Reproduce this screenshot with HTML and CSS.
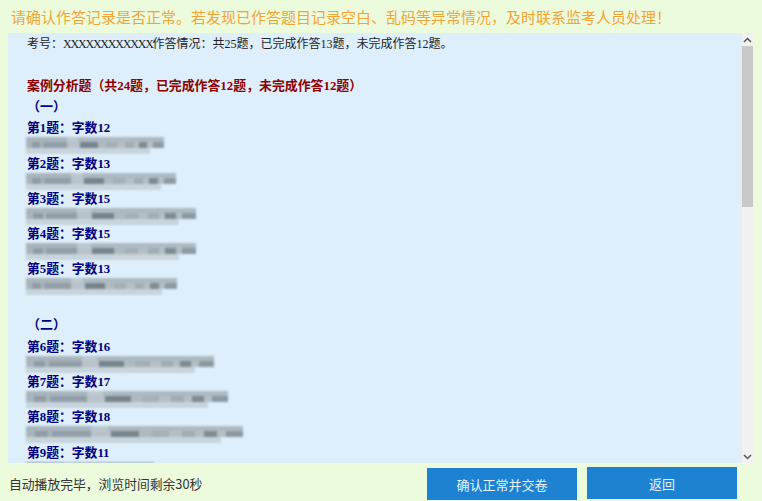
FILE: index.html
```html
<!DOCTYPE html>
<html lang="zh-CN">
<head>
  <meta charset="UTF-8">
  <meta name="viewport" content="width=device-width, initial-scale=1.0">
  <title>确认作答记录</title>
  <link rel="stylesheet" href="styles.css">
</head>
<body>
  <div class="notice">请确认作答记录是否正常。若发现已作答题目记录空白、乱码等异常情况，及时联系监考人员处理！</div>

  <div class="viewer">
    <div class="record">
      <p class="summary">考号：<span class="exam-no">XXXXXXXXXXXX</span>作答情况：共25题，已完成作答13题，未完成作答12题。</p>
      <h3 class="section-title">案例分析题（共24题，已完成作答12题，未完成作答12题）</h3>

      <h4 class="case-title">（一）</h4>
      <div class="question">第1题：字数12</div>
      <div class="answer" style="width: 138px"></div>
      <div class="question">第2题：字数13</div>
      <div class="answer" style="width: 150px"></div>
      <div class="question">第3题：字数15</div>
      <div class="answer" style="width: 170px"></div>
      <div class="question">第4题：字数15</div>
      <div class="answer" style="width: 170px"></div>
      <div class="question">第5题：字数13</div>
      <div class="answer" style="width: 151px"></div>

      <h4 class="case-title second">（二）</h4>
      <div class="question">第6题：字数16</div>
      <div class="answer" style="width: 188px"></div>
      <div class="question">第7题：字数17</div>
      <div class="answer" style="width: 202px"></div>
      <div class="question">第8题：字数18</div>
      <div class="answer" style="width: 217px"></div>
      <div class="question">第9题：字数11</div>
      <div class="answer" style="width: 128px"></div>
    </div>

    <div class="scrollbar">
      <div class="scroll-arrow">
        <svg width="9" height="6" viewBox="0 0 9 6"><path d="M1 5 L4.5 1.5 L8 5" fill="none" stroke="#555" stroke-width="1.5"/></svg>
      </div>
      <div class="scroll-track"><div class="scroll-thumb"></div></div>
      <div class="scroll-arrow">
        <svg width="9" height="6" viewBox="0 0 9 6"><path d="M1 1 L4.5 4.5 L8 1" fill="none" stroke="#555" stroke-width="1.5"/></svg>
      </div>
    </div>
  </div>

  <div class="footer">
    <span class="countdown">自动播放完毕，浏览时间剩余30秒</span>
    <button class="btn btn-confirm">确认正常并交卷</button>
    <button class="btn btn-back">返回</button>
  </div>
</body>
</html>
```

FILE: styles.css
```css
* {
  margin: 0;
  padding: 0;
  box-sizing: border-box;
}

body {
  width: 762px;
  height: 501px;
  overflow: hidden;
  background-color: #ecfbdc;
  font-family: "Noto Sans CJK SC", sans-serif;
}

.notice {
  height: 33px;
  padding: 6px 0 0 11px;
  font-size: 15px;
  line-height: 21px;
  color: #f4a436;
  white-space: nowrap;
}

.viewer {
  display: flex;
  width: 745px;
  height: 430px;
  margin-left: 8px;
}

.record {
  flex: 1;
  overflow: hidden;
  padding: 3px 0 0 19px;
  background-color: #deeffb;
  font-family: "Liberation Serif", "Noto Sans CJK SC", serif;
  font-size: 12px;
}

.summary {
  height: 16px;
  line-height: 16px;
  color: #222;
  white-space: nowrap;
}

.exam-no {
  letter-spacing: -1.2px;
}

.section-title {
  margin-top: 26px;
  height: 16px;
  line-height: 16px;
  font-size: 12.9px;
  color: #8b0000;
}

.case-title {
  margin-top: 5px;
  height: 16px;
  line-height: 16px;
  font-size: 13px;
  color: #00007f;
}

.case-title.second {
  margin-top: 26px;
}

.question {
  height: 18px;
  margin-top: 4.3px;
  line-height: 18px;
  font-size: 12.8px;
  font-weight: bold;
  color: #00007f;
}

.answer {
  height: 17px;
  margin-left: -1px;
  margin-bottom: -4px;
  filter: blur(1px);
  background-image:
    linear-gradient(90deg, #a9b5bd 0 4%, #8f9ca6 4% 10%, #a9b5bd 10% 12%, #929fa8 12% 30%, #b7c2ca 30% 39%, #76848e 39% 52%, #aebac2 52% 58%, #a3b0b9 58% 66%, #b3bec6 66% 72%, #a0adb6 72% 78%, #b3bec6 78% 82%, #7d8b95 82% 88%, #b3bec6 88% 92%, #8c99a3 92% 100%),
    linear-gradient(90deg, #a9b5bd 0 30%, #bcc7cf 30% 38%, #aebac2 38% 100%),
    linear-gradient(90deg, #c8d4dc 0 90%, #deeffb 90% 100%);
  background-size: 100% 6px, 100% 5px, 100% 6px;
  background-position: 0 5px, 0 0, 0 11px;
  background-repeat: no-repeat;
}

.scrollbar {
  display: flex;
  flex-direction: column;
  width: 11px;
  background-color: #f1f1f1;
}

.scroll-arrow {
  display: flex;
  flex: none;
  align-items: center;
  justify-content: center;
  height: 13px;
}

.scroll-track {
  flex: 1;
}

.scroll-thumb {
  height: 161px;
  background-color: #c8c8c8;
}

.footer {
  display: flex;
  align-items: flex-start;
  height: 38px;
  padding-top: 4px;
}

.countdown {
  width: 427px;
  padding: 7px 0 0 9px;
  font-size: 12.8px;
  line-height: 20px;
  color: #333;
  white-space: nowrap;
}

.btn {
  width: 150px;
  height: 32px;
  border: none;
  background-color: #1e82d2;
  color: #e8f3fb;
  font-family: "Noto Sans CJK SC", sans-serif;
  font-size: 13px;
}

.btn-confirm {
  margin-top: 1px;
}

.btn-back {
  margin-left: 10px;
}
```
